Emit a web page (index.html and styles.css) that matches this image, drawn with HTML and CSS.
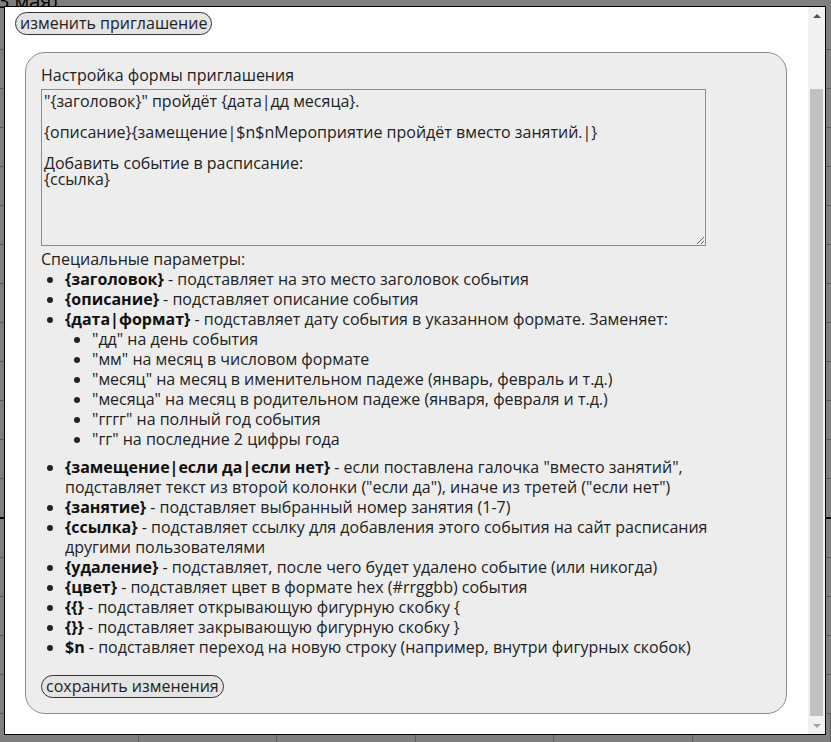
FILE: index.html
```html
<!DOCTYPE html>
<html lang="ru">
<head>
<meta charset="utf-8">
<title>Приглашение</title>
<link rel="stylesheet" href="styles.css">
</head>
<body>
<div class="bg">
  <div class="bg-title">(3 мая)</div>
  <div class="bg-rows">
    <div class="bg-row"></div>
    <div class="bg-row"></div>
    <div class="bg-row"></div>
    <div class="bg-row"></div>
    <div class="bg-row"></div>
    <div class="bg-row"></div>
    <div class="bg-row"></div>
    <div class="bg-row"></div>
    <div class="bg-row"></div>
    <div class="bg-row"></div>
    <div class="bg-row"></div>
    <div class="bg-row"></div>
    <div class="bg-row thick"></div>
    <div class="bg-row"></div>
    <div class="bg-row"></div>
    <div class="bg-row"></div>
    <div class="bg-row"></div>
    <div class="bg-row"></div>
    <div class="bg-row cols"><span></span><span></span><span></span><span></span><span></span><span></span></div>
  </div>
</div>
<div class="overlay"></div>
<div class="modal">
  <div class="modal-body">
    <button class="pill">изменить приглашение</button>
    <div class="panel">
      <div class="label">Настройка формы приглашения</div>
      <textarea class="tpl">"{заголовок}" пройдёт {дата|дд месяца}.

{описание}{замещение|$n$nМероприятие пройдёт вместо занятий.|}

Добавить событие в расписание:
{ссылка}</textarea>
      <div class="label sp">Специальные параметры:</div>
      <ul class="params">
        <li><b>{заголовок}</b> - подставляет на это место заголовок события</li>
        <li><b>{описание}</b> - подставляет описание события</li>
        <li><b>{дата|формат}</b> - подставляет дату события в указанном формате. Заменяет:
          <ul class="sub">
            <li>"дд" на день события</li>
            <li>"мм" на месяц в числовом формате</li>
            <li>"месяц" на месяц в именительном падеже (январь, февраль и т.д.)</li>
            <li>"месяца" на месяц в родительном падеже (января, февраля и т.д.)</li>
            <li>"гггг" на полный год события</li>
            <li>"гг" на последние 2 цифры года</li>
          </ul>
        </li>
        <li><b>{замещение|если да|если нет}</b> - если поставлена галочка "вместо занятий", подставляет текст из второй колонки ("если да"), иначе из третей ("если нет")</li>
        <li><b>{занятие}</b> - подставляет выбранный номер занятия (1-7)</li>
        <li><b>{ссылка}</b> - подставляет ссылку для добавления этого события на сайт расписания другими пользователями</li>
        <li><b>{удаление}</b> - подставляет, после чего будет удалено событие (или никогда)</li>
        <li><b>{цвет}</b> - подставляет цвет в формате hex (#rrggbb) события</li>
        <li><b>{{}</b> - подставляет открывающую фигурную скобку {</li>
        <li><b>{}}</b> - подставляет закрывающую фигурную скобку }</li>
        <li><b>$n</b> - подставляет переход на новую строку (например, внутри фигурных скобок)</li>
      </ul>
      <button class="pill save">сохранить изменения</button>
    </div>
  </div>
  <div class="scrollbar">
    <div class="sb-btn"><span class="arrow up"></span></div>
    <div class="sb-track"><div class="sb-thumb"></div></div>
    <div class="sb-btn"><span class="arrow down"></span></div>
  </div>
</div>
</body>
</html>
```
FILE: styles.css
```css
html, body {
  margin: 0;
  padding: 0;
  height: 742px;
  overflow: hidden;
  background: #fff;
  font-family: "Open Sans", "DejaVu Sans", sans-serif;
  color: #222;
}

.bg {
  width: 831px;
}
.bg-title {
  font-size: 20px;
  line-height: 20px;
  margin-top: -9px;
  color: #000;
  text-indent: -8px;
}
.bg-row {
  height: 38px;
  border-bottom: 1px solid #bbb;
}
.bg-row.thick {
  border-bottom: 2px solid #000;
}
.bg-row.cols {
  display: flex;
}
.bg-row.cols span {
  width: 150px;
  border-right: 1px solid #bbb;
}

.overlay {
  position: fixed;
  inset: 0;
  background: rgba(0, 0, 0, 0.5);
}

.modal {
  position: fixed;
  left: 4px;
  top: 6px;
  width: 820px;
  height: 727px;
  border: 1px solid #000;
  background: #fff;
  display: flex;
}
.modal-body {
  flex: 1;
  min-width: 0;
  padding: 5px 21px 0 10px;
  overflow: hidden;
}

.pill {
  display: block;
  font-family: "Open Sans", "DejaVu Sans", sans-serif;
  font-size: 16px;
  line-height: 21px;
  height: 23px;
  padding: 0 4px;
  color: #222;
  background: #e4e4e4;
  border: 1px solid #333;
  border-radius: 12px;
}

.panel {
  margin: 17px 0 0 10px;
  background: #ededed;
  border: 1px solid #8c8c8c;
  border-radius: 20px;
  padding: 12px 15px 15px;
  font-size: 16px;
  line-height: 20px;
}
.label {
  line-height: 20px;
}
.label.sp {
  margin-top: 3px;
}
.tpl {
  display: block;
  box-sizing: border-box;
  margin-top: 4px;
  width: 665px;
  height: 157px;
  padding: 4px 2px;
  font-family: "Open Sans", "DejaVu Sans", sans-serif;
  font-size: 16px;
  line-height: 15.6px;
  color: #222;
  background: #ededed;
  border: 1px solid #8c8c8c;
  border-radius: 0;
}
.params {
  margin: 0;
  padding-left: 24px;
}
.params b {
  color: #111;
}
.sub {
  margin: 0 0 8px;
  padding-left: 27px;
  list-style: disc;
}
.save {
  margin-top: 18px;
}

.scrollbar {
  width: 17px;
  background: #f1f1f1;
  display: flex;
  flex-direction: column;
}
.sb-btn {
  height: 17px;
  display: flex;
  align-items: center;
  justify-content: center;
}
.arrow {
  width: 0;
  height: 0;
  border-left: 4px solid transparent;
  border-right: 4px solid transparent;
}
.arrow.up {
  border-bottom: 4px solid #505050;
}
.arrow.down {
  border-top: 4px solid #a3a3a3;
}
.sb-track {
  flex: 1;
  padding: 65px 2px 1px;
}
.sb-thumb {
  height: 100%;
  background: #c1c1c1;
}
```
